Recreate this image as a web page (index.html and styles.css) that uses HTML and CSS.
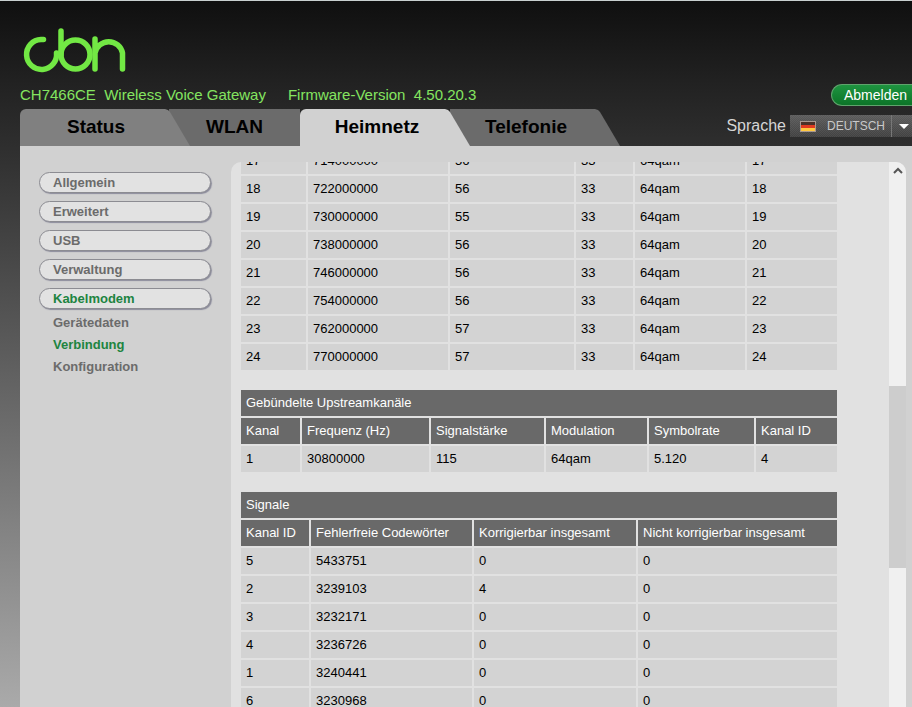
FILE: index.html
```html
<!DOCTYPE html>
<html lang="de">
<head>
    <meta charset="UTF-8">
    <meta name="viewport" content="width=device-width, initial-scale=1.0">
    <title>Wireless Voice Gateway</title>
    <link rel="stylesheet" href="styles.css">
</head>
<body>
    <header class="header">
        <div class="brand">
            <svg class="logo" width="110" height="46" viewBox="20 28 110 46" role="img" aria-label="cbn">
                <path d="M43.500 39.500H41A15 15 0 1 0 56.500 53"/>
                <path d="M61 31V54.500"/>
                <circle cx="75.500" cy="54.500" r="14.500"/>
                <path d="M95 39V69M95 53A14 14 0 0 1 122.500 53V69"/>
            </svg>
            <div class="info">
                <span>CH7466CE&nbsp; Wireless Voice Gateway</span>
                <span>Firmware-Version&nbsp; 4.50.20.3</span>
            </div>
            <nav class="tabs">
                <a href="#" class="tab tab-status">Status</a>
                <a href="#" class="tab tab-wlan">WLAN</a>
                <a href="#" class="tab active">Heimnetz</a>
                <a href="#" class="tab tab-phone">Telefonie</a>
            </nav>
        </div>
        <div class="tools">
            <button type="button" class="logout">Abmelden</button>
            <div class="language">
                <label for="lang">Sprache</label>
                <div class="select-box">
                    <select id="lang">
                        <option>DEUTSCH</option>
                    </select>
                    <svg class="flag" width="16" height="11" viewBox="0 0 16 11" aria-hidden="true">
                        <rect width="16" height="11" fill="#a89890"/>
                        <rect x="1" y="1" width="14" height="3" fill="#4a3028"/>
                        <rect x="1" y="4" width="14" height="3" fill="#e03a20"/>
                        <rect x="1" y="7" width="14" height="3" fill="#ffc840"/>
                    </svg>
                    <span class="arrow"></span>
                </div>
            </div>
        </div>
    </header>

    <main class="panel">
        <nav class="sidebar">
            <a href="#" class="menu-item">Allgemein</a>
            <a href="#" class="menu-item">Erweitert</a>
            <a href="#" class="menu-item">USB</a>
            <a href="#" class="menu-item">Verwaltung</a>
            <a href="#" class="menu-item selected">Kabelmodem</a>
            <div class="submenu">
                <a href="#">Gerätedaten</a>
                <a href="#" class="selected">Verbindung</a>
                <a href="#">Konfiguration</a>
            </div>
        </nav>

        <section class="content">
            <div class="tables">
                <table class="downstream">
                    <colgroup><col class="c1"><col class="c2"><col class="c3"><col class="c4"><col class="c5"><col></colgroup>
                    <tbody>
                        <tr><td>17</td><td>714000000</td><td>56</td><td>33</td><td>64qam</td><td>17</td></tr>
                        <tr><td>18</td><td>722000000</td><td>56</td><td>33</td><td>64qam</td><td>18</td></tr>
                        <tr><td>19</td><td>730000000</td><td>55</td><td>33</td><td>64qam</td><td>19</td></tr>
                        <tr><td>20</td><td>738000000</td><td>56</td><td>33</td><td>64qam</td><td>20</td></tr>
                        <tr><td>21</td><td>746000000</td><td>56</td><td>33</td><td>64qam</td><td>21</td></tr>
                        <tr><td>22</td><td>754000000</td><td>56</td><td>33</td><td>64qam</td><td>22</td></tr>
                        <tr><td>23</td><td>762000000</td><td>57</td><td>33</td><td>64qam</td><td>23</td></tr>
                        <tr><td>24</td><td>770000000</td><td>57</td><td>33</td><td>64qam</td><td>24</td></tr>
                    </tbody>
                </table>

                <table class="upstream">
                    <colgroup><col class="c1"><col class="c2"><col class="c3"><col class="c4"><col class="c5"><col></colgroup>
                    <thead>
                        <tr><th colspan="6">Gebündelte Upstreamkanäle</th></tr>
                        <tr><th>Kanal</th><th>Frequenz (Hz)</th><th>Signalstärke</th><th>Modulation</th><th>Symbolrate</th><th>Kanal ID</th></tr>
                    </thead>
                    <tbody>
                        <tr><td>1</td><td>30800000</td><td>115</td><td>64qam</td><td>5.120</td><td>4</td></tr>
                    </tbody>
                </table>

                <table class="signals">
                    <colgroup><col class="c1"><col class="c2"><col class="c3"><col></colgroup>
                    <thead>
                        <tr><th colspan="4">Signale</th></tr>
                        <tr><th>Kanal ID</th><th>Fehlerfreie Codewörter</th><th>Korrigierbar insgesamt</th><th>Nicht korrigierbar insgesamt</th></tr>
                    </thead>
                    <tbody>
                        <tr><td>5</td><td>5433751</td><td>0</td><td>0</td></tr>
                        <tr><td>2</td><td>3239103</td><td>4</td><td>0</td></tr>
                        <tr><td>3</td><td>3232171</td><td>0</td><td>0</td></tr>
                        <tr><td>4</td><td>3236726</td><td>0</td><td>0</td></tr>
                        <tr><td>1</td><td>3240441</td><td>0</td><td>0</td></tr>
                        <tr><td>6</td><td>3230968</td><td>0</td><td>0</td></tr>
                    </tbody>
                </table>
            </div>
            <div class="scrollbar">
                <button type="button" class="scroll-up" aria-label="Nach oben">
                    <svg width="10" height="7" viewBox="0 0 10 7" aria-hidden="true"><path d="M1 6L5 2L9 6"/></svg>
                </button>
                <div class="track"><div class="thumb"></div></div>
            </div>
        </section>
    </main>
</body>
</html>
```
FILE: styles.css
```css
* {
    box-sizing: border-box;
}
body {
    margin: 0;
    height: 100vh;
    overflow: hidden;
    display: flex;
    flex-direction: column;
    border-top: 1px solid #c8cfcf;
    font-family: "Liberation Sans", Arial, sans-serif;
    font-size: 13px;
    background: linear-gradient(#0f0f0f, #222 12%, #2f2f2f 21%, #646464 55%, #aaa);
}
a {
    text-decoration: none;
}
.header {
    display: flex;
    justify-content: space-between;
    padding-left: 20px;
}
.brand {
    padding-top: 27px;
}
.logo {
    display: block;
    fill: none;
    stroke: #72e844;
    stroke-width: 5.5;
    stroke-linecap: round;
}
.info {
    display: flex;
    gap: 22px;
    padding: 12px 0 5px;
    line-height: 18px;
    font-size: 15px;
    color: #84e560;
    white-space: nowrap;
}

/* main tabs */
.tabs {
    display: flex;
}
.tab {
    width: 170px;
    height: 37px;
    padding-right: 18px;
    border-radius: 6px 0 0 0;
    line-height: 35px;
    font-size: 19px;
    font-weight: bold;
    text-align: center;
    color: #000;
    background: #6b6b6b;
    clip-path: polygon(0 0, 145px 0, 148px 1px, 150px 3px, 100% 100%, 0 100%);
}
.tab-status {
    z-index: 1;
    background: #808080;
}
.tab-wlan {
    width: 131px;
    margin-left: -21px;
    padding: 0;
    border-radius: 0;
    clip-path: none;
}
.tab.active {
    z-index: 1;
    padding-right: 16px;
    background: #d1d1d1;
}
.tab-phone {
    margin-left: -20px;
    border-radius: 0;
}

/* logout and language */
.tools {
    display: flex;
    flex-direction: column;
    align-items: flex-end;
    padding-top: 83px;
}
.logout {
    width: 81px;
    height: 22px;
    padding: 0 0 0 12px;
    border: 1px solid #5fa36c;
    border-right: 0;
    border-radius: 11px 0 0 11px;
    font: 14px "Liberation Sans", Arial, sans-serif;
    text-align: left;
    white-space: nowrap;
    color: #fff;
    background: linear-gradient(#1e9440, #0c7428);
}
.language {
    display: flex;
    align-items: center;
    gap: 4px;
    margin-top: 9px;
    font-size: 16px;
    color: #d5d5d5;
}
.select-box {
    position: relative;
    width: 122px;
}
.select-box select {
    appearance: none;
    display: block;
    width: 100%;
    height: 22px;
    padding: 0 0 0 37px;
    border: 0;
    border-radius: 0;
    font: 12px "Liberation Sans", Arial, sans-serif;
    color: #c9c9c9;
    background: repeating-conic-gradient(rgba(255, 255, 255, 0.06) 0 25%, transparent 0 50%) 0 0 / 2px 2px, linear-gradient(#5c5c5c, #404040);
}
.flag {
    position: absolute;
    left: 10px;
    top: 6px;
}
.arrow {
    position: absolute;
    right: 0;
    top: 0;
    display: flex;
    align-items: center;
    justify-content: center;
    width: 21px;
    height: 22px;
    padding-left: 3px;
    border-left: 1px solid #777;
    pointer-events: none;
}
.arrow::before {
    content: "";
    border: 5px solid transparent;
    border-top-color: #fff;
    border-bottom: 0;
}

/* page body */
.panel {
    flex: 1;
    min-height: 0;
    display: flex;
    margin-left: 20px;
    padding: 16px 6px 0 0;
    background: #d1d1d1;
}
.sidebar {
    flex: none;
    display: flex;
    flex-direction: column;
    gap: 8px;
    width: 211px;
    padding: 10px 20px 0 19px;
    font-weight: bold;
}
.sidebar a {
    color: #6b6b6b;
}
.sidebar .selected {
    color: #208440;
}
.menu-item {
    height: 21px;
    padding-left: 13px;
    border: 1px solid #8c8c92;
    border-radius: 11px;
    line-height: 19px;
    background: #e2e2e2;
    box-shadow: 1px 1px 1px #8c8c9c;
}
.submenu {
    display: flex;
    flex-direction: column;
    margin-top: -5px;
    padding-left: 14px;
    line-height: 22px;
}
.content {
    flex: 1;
    display: flex;
    overflow: hidden;
    border-radius: 10px 10px 0 0;
    background: #e1e1e1;
}
.tables {
    flex: 1;
    margin-top: -16px;
    padding: 0 50px 0 8px;
}
table {
    width: 100%;
    margin-bottom: 16px;
    table-layout: fixed;
    border-spacing: 2px;
}
td, th {
    height: 26px;
    padding: 0 5px 2px;
    text-align: left;
    font-weight: normal;
    white-space: nowrap;
}
td {
    color: #000;
    background: #d3d3d3;
}
th {
    color: #fff;
    background: #696969;
}
.downstream .c1 { width: 65px; }
.downstream .c2 { width: 140px; }
.downstream .c3 { width: 124px; }
.downstream .c4 { width: 57px; }
.downstream .c5 { width: 110px; }
.upstream .c1 { width: 59px; }
.upstream .c2 { width: 127px; }
.upstream .c3 { width: 113px; }
.upstream .c4 { width: 101px; }
.upstream .c5 { width: 105px; }
.signals .c1 { width: 68px; }
.signals .c2 { width: 161px; }
.signals .c3 { width: 162px; }

.scrollbar {
    display: flex;
    flex-direction: column;
    width: 17px;
    background: #f0f0f0;
}
.scroll-up {
    display: flex;
    align-items: center;
    justify-content: center;
    height: 17px;
    padding: 0;
    border: 0;
    background: none;
}
.scroll-up path {
    fill: none;
    stroke: #555;
    stroke-width: 2;
}
.track {
    flex: 1;
    display: grid;
    grid-template-rows: 207fr 182fr 139fr;
}
.thumb {
    grid-row: 2;
    background: #cdcdcd;
}
```
